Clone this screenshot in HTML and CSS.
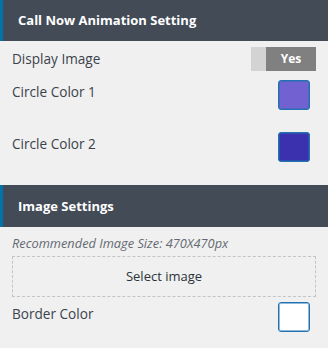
FILE: index.html
```html
<!DOCTYPE html>
<html lang="en">
<head>
  <meta charset="UTF-8" />
  <meta name="viewport" content="width=device-width, initial-scale=1.0"/>
  <title>Call Now Settings</title>
  <link rel="stylesheet" href="styles.css">
</head>
<body>
  <!-- Animation -->
  <div class="panel-head">Call Now Animation Setting</div>

  <div class="row row-toggle">
    <span class="label">Display Image</span>
    <div class="toggle">
      <span class="toggle-off"></span>
      <span class="toggle-on">Yes</span>
    </div>
  </div>

  <div class="row row-color first">
    <span class="label">Circle Color 1</span>
    <span class="swatch" style="background-color: #7262d1;"></span>
  </div>

  <div class="row row-color second">
    <span class="label">Circle Color 2</span>
    <span class="swatch" style="background-color: #3b30ad;"></span>
  </div>

  <!-- Image -->
  <div class="panel-head panel-head-image">Image Settings</div>

  <p class="note">Recommended Image Size: 470X470px</p>

  <div class="select-box">Select image</div>

  <div class="row row-color border">
    <span class="label">Border Color</span>
    <span class="swatch" style="background-color: #ffffff;"></span>
  </div>
</body>
</html>
```

FILE: styles.css
```css
* {
  margin: 0;
  padding: 0;
  box-sizing: border-box;
}

body {
  width: 328px;
  height: 348px;
  background-color: #f0f0f1;
  font-family: 'Open Sans', 'Noto Sans', sans-serif;
  color: #3c434a;
  overflow: hidden;
}

.panel-head {
  height: 41px;
  line-height: 41px;
  padding-left: 15px;
  border-left: 3px solid #0073aa;
  background-color: #434b57;
  color: #fff;
  font-size: 13px;
  font-weight: 700;
}

.panel-head-image {
  height: 42px;
  line-height: 42px;
  margin-top: 23px;
}

.row {
  display: flex;
  justify-content: space-between;
  padding: 0 12px;
}

.label {
  font-size: 13.6px;
  line-height: 24px;
}

.row-toggle {
  margin-top: 6px;
  height: 24px;
  align-items: center;
}

.toggle {
  display: flex;
  width: 65px;
  height: 24px;
}

.toggle-off {
  width: 15px;
  background-color: #d3d3d3;
}

.toggle-on {
  flex: 1;
  background-color: #808080;
  color: #fff;
  font-size: 12px;
  font-weight: 700;
  line-height: 24px;
  text-align: center;
}

.row-color {
  height: 30px;
  align-items: flex-start;
}

.row-color.first {
  margin-top: 9px;
}

.row-color.second {
  margin-top: 22px;
}

.row-color.border {
  margin-top: 5px;
}

.swatch {
  width: 32px;
  height: 30px;
  margin-right: 6px;
  border: 1px solid #2271b1;
  border-radius: 3px;
  box-shadow: inset 0 0 0 1px rgba(34, 113, 177, 0.5);
}

.note {
  margin-top: 6px;
  padding-left: 12px;
  height: 20px;
  line-height: 20px;
  font-size: 12.8px;
  font-style: italic;
  color: #646970;
}

.select-box {
  margin: 3px 12px 0;
  height: 41px;
  line-height: 39px;
  border: 1px dashed #c3c4c7;
  text-align: center;
  font-size: 13px;
  color: #2c3338;
}
```
